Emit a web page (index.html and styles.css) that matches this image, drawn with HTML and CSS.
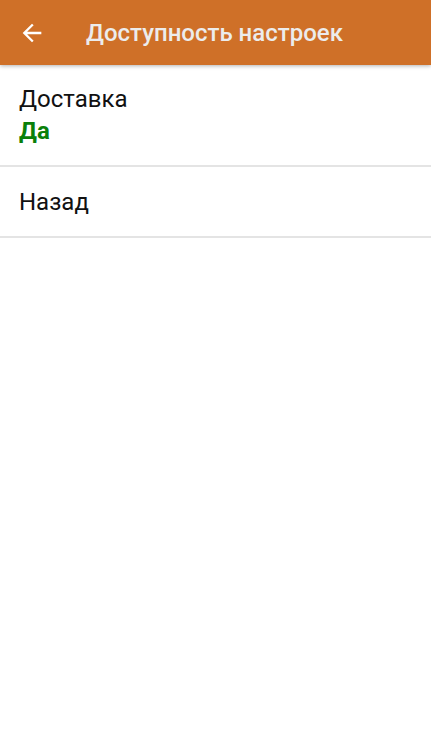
FILE: index.html
```html
<!DOCTYPE html>
<html lang="ru">
<head>
<meta charset="utf-8">
<title>Доступность настроек</title>
<link rel="stylesheet" href="styles.css">
</head>
<body>
<header class="appbar">
  <span class="back">
    <svg width="28" height="28" viewBox="0 0 24 24"><path fill="#ffffff" d="M20 11H7.83l5.59-5.59L12 4l-8 8 8 8 1.41-1.41L7.83 13H20v-2z"/></svg>
  </span>
  <h1 class="title">Доступность настроек</h1>
</header>
<main class="list">
  <div class="item item-two">
    <div class="label">Доставка</div>
    <div class="value">Да</div>
  </div>
  <div class="item item-one">
    <div class="label">Назад</div>
  </div>
</main>
</body>
</html>
```

FILE: styles.css
```css
html, body {
  margin: 0;
  padding: 0;
  background: #ffffff;
  font-family: Roboto, "Noto Sans", sans-serif;
}
.appbar {
  height: 65px;
  background: #cf7028;
  display: flex;
  align-items: center;
  box-shadow: 0 1px 4px rgba(0, 0, 0, 0.3);
  position: relative;
}
.back {
  width: 28px;
  height: 28px;
  margin-left: 18px;
  display: flex;
}
.title {
  margin: 0 0 0 40px;
  font-size: 24px;
  font-weight: 500;
  color: #ececec;
  line-height: 1;
}
.list {
  display: flex;
  flex-direction: column;
}
.item {
  border-bottom: 2px solid #e4e4e4;
  padding-left: 19px;
  display: flex;
  flex-direction: column;
  justify-content: center;
}
.item-two {
  height: 100px;
}
.item-one {
  height: 69px;
}
.label {
  font-size: 24px;
  color: #111111;
  line-height: 30px;
}
.value {
  font-size: 24px;
  font-weight: 700;
  color: #0a800a;
  line-height: 30px;
  margin-top: 2px;
}
```
